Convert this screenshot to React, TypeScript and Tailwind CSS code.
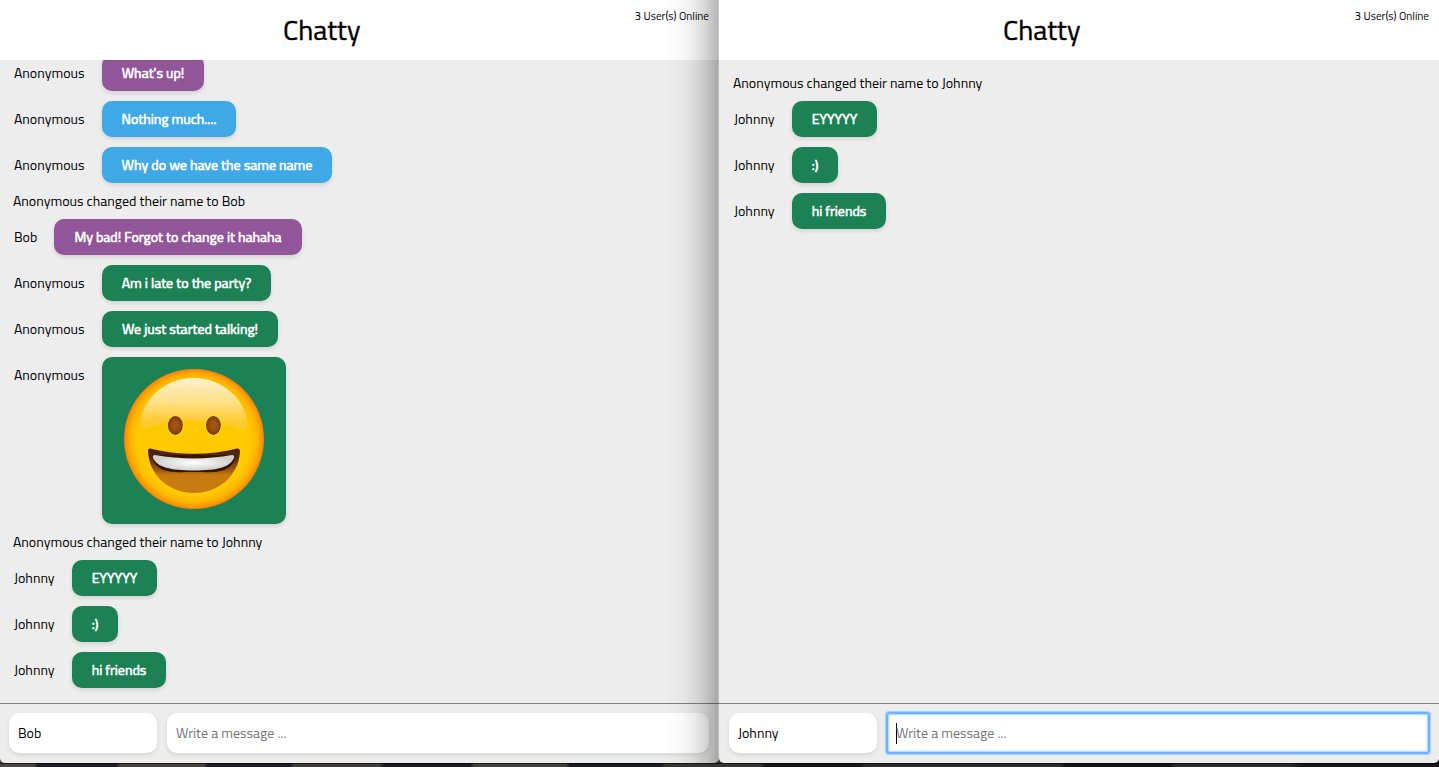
import React from 'react';

type Message = {
  name?: 'Anonymous' | 'Johnny' | 'Bob';
  text?: string;
  look?: string;
};

const nameWidths = {
  Anonymous: 'w-[88px]',
  Johnny: 'w-[58px]',
  Bob: 'w-[40px]',
};

const johnnyMessages: Message[] = [
  { text: 'Anonymous changed their name to Johnny' },
  { name: 'Johnny', text: 'EYYYYY', look: 'w-[85px] bg-[#1c8154]' },
  { name: 'Johnny', text: ':)', look: 'w-[46px] bg-[#1c8154]' },
  { name: 'Johnny', text: 'hi friends', look: 'w-[94px] bg-[#1c8154]' },
];

const bobMessages: Message[] = [
  { name: 'Anonymous', text: "What's up!", look: 'w-[102px] bg-[#92559a]' },
  { name: 'Anonymous', text: 'Nothing much....', look: 'w-[134px] bg-[#3fa8e6]' },
  { name: 'Anonymous', text: 'Why do we have the same name', look: 'w-[230px] bg-[#3fa8e6]' },
  { text: 'Anonymous changed their name to Bob' },
  { name: 'Bob', text: 'My bad! Forgot to change it hahaha', look: 'w-[248px] bg-[#92559a]' },
  { name: 'Anonymous', text: 'Am i late to the party?', look: 'w-[169px] bg-[#1c8154]' },
  { name: 'Anonymous', text: 'We just started talking!', look: 'w-[176px] bg-[#1c8154]' },
  { name: 'Anonymous' },
  ...johnnyMessages,
];

function GrinningFace() {
  return (
    <svg viewBox="0 0 142 142" className="h-[142px] w-[142px]" aria-label="Grinning face">
      <defs>
        <radialGradient id="face" cx="50%" cy="50%" r="50%">
          <stop offset="0.8" stopColor="#ffc900" />
          <stop offset="0.9" stopColor="#ffb800" />
          <stop offset="0.97" stopColor="#ff9500" />
          <stop offset="1" stopColor="#f08010" />
        </radialGradient>
        <linearGradient id="shine" x1="0" y1="0" x2="0" y2="1">
          <stop offset="0" stopColor="#fff2cd" />
          <stop offset="0.45" stopColor="#ffe18a" />
          <stop offset="0.83" stopColor="#ffcb34" />
          <stop offset="1" stopColor="#ffc928" />
        </linearGradient>
        <radialGradient id="eye">
          <stop offset="0" stopColor="#a95412" />
          <stop offset="0.55" stopColor="#9b4c11" />
          <stop offset="1" stopColor="#713911" />
        </radialGradient>
        <linearGradient id="mouth" x1="0" y1="0" x2="0" y2="1">
          <stop offset="0" stopColor="#4b210b" />
          <stop offset="0.2" stopColor="#54260a" />
          <stop offset="0.5" stopColor="#a65b0c" />
          <stop offset="0.6" stopColor="#c77a0f" />
        </linearGradient>
        <radialGradient id="teeth">
          <stop offset="0" stopColor="#ffffff" />
          <stop offset="1" stopColor="#cfcfcf" />
        </radialGradient>
        <filter id="soft" x="-10%" y="-20%" width="120%" height="150%">
          <feGaussianBlur stdDeviation="0.7" />
        </filter>
      </defs>
      <circle cx="71" cy="71" r="70" fill="url(#face)" />
      <path d="M71 10C40 10 18 34 18 56C18 62 22 62 27 59C53 51 89 51 115 60C121 63 124 62 124 54C122 31 99 10 71 10Z" fill="url(#shine)" />
      <ellipse cx="52.4" cy="57.4" rx="8.2" ry="10.3" fill="#ffda24" filter="url(#soft)" />
      <ellipse cx="90.4" cy="57.4" rx="8.2" ry="10.3" fill="#ffda24" filter="url(#soft)" />
      <ellipse cx="52.4" cy="57.4" rx="7.4" ry="9.5" fill="url(#eye)" />
      <ellipse cx="90.4" cy="57.4" rx="7.4" ry="9.5" fill="url(#eye)" />
      <path d="M27 80.5C54 87.5 88 87.5 114 80.5Q117 80 117 83C116 108 95 125 71 125C47 125 26 108 25 83Q25 80 27 80.5Z" fill="url(#mouth)" />
      <path d="M29 87C32 107 52 104 71 104C90 104 109 107 113 87Z" fill="#351505" filter="url(#soft)" />
      <path d="M32 87C57 91.5 85 91.5 109 87Q112 87 111 90C107 99 95 102.5 71 102.5C47 102.5 34 99 30 90Q29 87 32 87Z" fill="url(#teeth)" />
    </svg>
  );
}

function MessageRow({ name, text, look = '' }: Message) {
  if (!name) {
    return (
      <div className="flex h-[26px] shrink-0 items-center pb-[2px] pl-[13px] text-[14px] whitespace-nowrap">
        {text}
      </div>
    );
  }
  return (
    <div className="flex shrink-0 items-start py-[5px] pl-[14px]">
      <span className={`h-9 shrink-0 text-[14px] leading-9 ${nameWidths[name]}`}>{name}</span>
      {text ? (
        <div className={`h-9 rounded-[10px] text-center text-[14px] leading-9 font-normal whitespace-nowrap text-white shadow-[0_2px_4px_rgba(0,0,0,0.12)] [-webkit-text-stroke:0.6px_white] ${look}`}>
          {text}
        </div>
      ) : (
        <div className="flex h-[167px] w-[184px] justify-center rounded-[10px] bg-[#1c8154] pt-[11px] shadow-[0_2px_4px_rgba(0,0,0,0.12)]">
          <GrinningFace />
        </div>
      )}
    </div>
  );
}

type WindowProps = {
  user: string;
  messages: Message[];
  focused?: boolean;
};

function ChatWindow({ user, messages, focused = false }: WindowProps) {
  return (
    <section className={`relative flex h-[763px] flex-col overflow-hidden rounded-b-[5px] bg-[#ededed] ${focused ? 'w-[720px] pl-px' : 'w-[719px]'}`}>
      <header className={`flex h-[60px] shrink-0 justify-between bg-white pr-[10px] ${focused ? '-ml-px pl-[284px]' : 'pl-[283px]'}`}>
        <h1 className="pt-[10px] text-[28px] leading-10 font-normal [-webkit-text-stroke:0.4px_black]">Chatty</h1>
        <span className="pt-[8px] text-[11.2px] leading-4">3 User(s) Online</span>
      </header>
      <main className={`flex min-h-0 flex-1 flex-col overflow-hidden py-[10px] ${focused ? 'justify-start' : 'justify-end'}`}>
        {messages.map((message, index) => (
          <MessageRow key={index} {...message} />
        ))}
      </main>
      <footer className={`flex h-[60px] shrink-0 gap-[10px] border-t border-[#808080] pt-[9px] text-[14px] ${focused ? '-ml-px pl-[10px]' : 'pl-[9px]'}`}>
        <div className="h-10 w-[148px] rounded-[10px] bg-white pl-[9px] leading-10 shadow-[0_2px_4px_rgba(0,0,0,0.1)]">{user}</div>
        <div className={`flex h-10 w-[542px] items-center bg-white pl-[9px] text-[#757575] ${focused ? 'rounded-[2px] shadow-[0_0_0_1px_#6db2fa,0_0_1px_2px_#a5d0fb,inset_0_0_0_1px_#6db2fa,inset_0_0_2px_2px_#a5d0fb]' : 'rounded-[10px] shadow-[0_2px_4px_rgba(0,0,0,0.1)]'}`}>
          {focused && <span className="-mr-px h-[21px] w-px bg-black" />}
          <span className="leading-10">Write a message ...</span>
        </div>
      </footer>
      {!focused && (
        <div className="absolute inset-y-0 right-0 w-[54px] border-r border-black/20 bg-[linear-gradient(to_right,transparent,rgba(0,0,0,0.02)_30%,rgba(0,0,0,0.08)_55%,rgba(0,0,0,0.18)_80%,rgba(0,0,0,0.29))]" />
      )}
    </section>
  );
}

export default function App() {
  return (
    <div className="h-[767px] w-[1439px] overflow-hidden bg-[linear-gradient(90deg,#4b4744_0_34px,#1d1c22_38px_116px,#454240_120px_204px,#1d1c22_208px_290px,#413f3e_294px_380px,#1b1b20_384px_470px,#424140_474px_566px,#1b1c20_570px_660px,#363534_665px_760px,#161616_765px_860px,#2a2a2a_865px_1060px,#151515_1065px_1170px,#2b2a28_1175px_1290px,#191919_1300px)] font-['Titillium_Web','Roboto',sans-serif] text-black">
      <div className="flex">
        <ChatWindow user="Bob" messages={bobMessages} />
        <ChatWindow user="Johnny" messages={johnnyMessages} focused />
      </div>
      <div className="h-px bg-black/60" />
    </div>
  );
}
